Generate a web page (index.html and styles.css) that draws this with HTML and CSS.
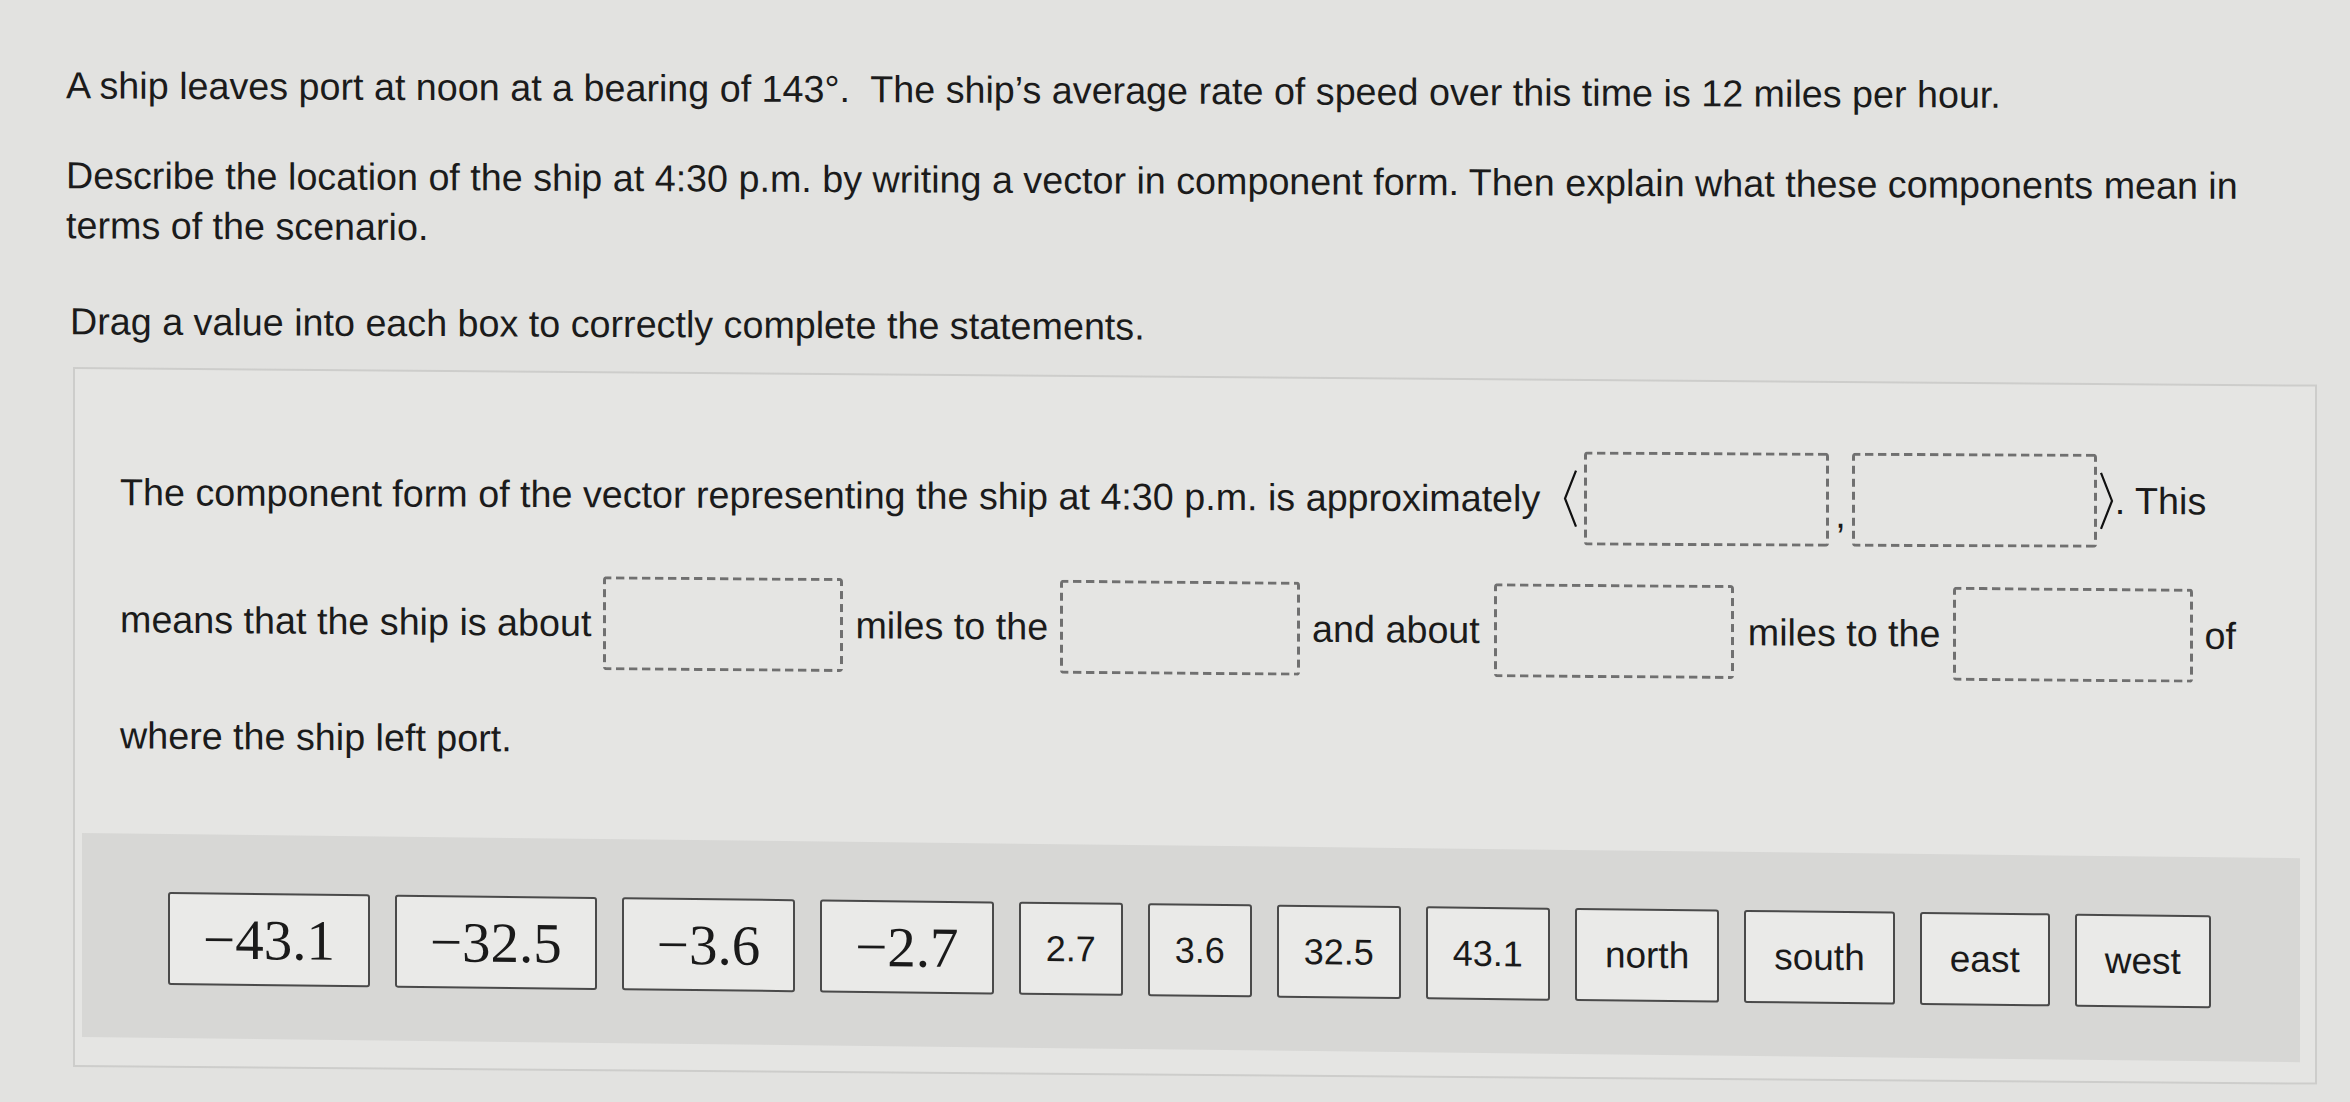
FILE: index.html
```html
<!DOCTYPE html>
<html lang="en">
<head>
<meta charset="utf-8">
<title>Vector drag and drop</title>
<link rel="stylesheet" href="styles.css">
</head>
<body>
<main class="page">
  <p class="stem stem-first">A ship leaves port at noon at a bearing of 143°.&nbsp; The ship’s average rate of speed over this time is 12 miles per hour.</p>
  <p class="stem stem-second">Describe the location of the ship at 4:30 p.m. by writing a vector in component form. Then explain what these components mean in terms of the scenario.</p>
  <p class="stem stem-third">Drag a value into each box to correctly complete the statements.</p>

  <section class="panel">
    <div class="statement row-one">
      <span class="txt">The component form of the vector representing the ship at 4:30 p.m. is approximately</span>
      <svg class="fence fence-left" width="16" height="60" viewBox="0 0 16 60"><polyline points="14,2 3,30 14,58" fill="none" stroke="#111" stroke-width="2.2"/></svg>
      <span class="drop drop-wide"></span>
      <span class="comma">,</span>
      <span class="drop drop-wide"></span>
      <svg class="fence fence-right" width="16" height="60" viewBox="0 0 16 60"><polyline points="2,2 13,30 2,58" fill="none" stroke="#111" stroke-width="2.2"/></svg>
      <span class="txt">. This</span>
    </div>
    <div class="statement row-two">
      <span class="txt">means that the ship is about</span>
      <span class="drop"></span>
      <span class="txt">miles to the</span>
      <span class="drop"></span>
      <span class="txt">and about</span>
      <span class="drop drop-gap"></span>
      <span class="txt">miles to the</span>
      <span class="drop"></span>
      <span class="txt">of</span>
    </div>
    <div class="statement row-three">
      <span class="txt">where the ship left port.</span>
    </div>

    <div class="tray">
      <span class="tile tile-serif">−43.1</span>
      <span class="tile tile-serif">−32.5</span>
      <span class="tile tile-serif">−3.6</span>
      <span class="tile tile-serif">−2.7</span>
      <span class="tile tile-num">2.7</span>
      <span class="tile tile-num">3.6</span>
      <span class="tile tile-num">32.5</span>
      <span class="tile tile-num">43.1</span>
      <span class="tile">north</span>
      <span class="tile">south</span>
      <span class="tile">east</span>
      <span class="tile">west</span>
    </div>
  </section>
</main>
</body>
</html>
```

FILE: styles.css
```css
html, body {
  margin: 0;
  padding: 0;
}

body {
  background: #e2e2e0;
  color: #1b1b1b;
  font-family: "Liberation Sans", Arial, sans-serif;
  width: 2350px;
  height: 1102px;
  overflow: hidden;
}

.page {
  padding: 60px 0 0 0;
}

.stem {
  margin: 0;
  padding-left: 66px;
  font-size: 37.7px;
  line-height: 50px;
  transform: skewY(0.28deg);
  transform-origin: 0 0;
}

.stem-second {
  margin-top: 40px;
  width: 2230px;
}

.stem-third {
  margin-top: 46px;
  padding-left: 70px;
}

.panel {
  margin: 21px 0 0 73px;
  width: 2244px;
  height: 700px;
  box-sizing: border-box;
  border: 2px solid #cdcdcb;
  background: #e5e5e3;
  padding-top: 76px;
  display: flex;
  flex-direction: column;
  transform: skewY(0.45deg);
  transform-origin: 0 0;
}

.statement {
  display: flex;
  align-items: center;
  padding-left: 45px;
  font-size: 37.7px;
  line-height: 50px;
}

.row-one {
  height: 94px;
  transform: skewY(-0.2deg);
  transform-origin: 0 50%;
}

.row-two {
  height: 94px;
  margin-top: 33px;
  gap: 12px;
}

.row-three {
  margin-top: 44px;
}

.drop {
  display: inline-block;
  flex: none;
  box-sizing: border-box;
  width: 240px;
  height: 94px;
  border-radius: 4px;
  background:
    linear-gradient(90deg, #707070 8px, transparent 8px) left top / 13px 3px repeat-x,
    linear-gradient(90deg, #707070 8px, transparent 8px) left bottom / 13px 3px repeat-x,
    linear-gradient(180deg, #707070 8px, transparent 8px) left top / 3px 13px repeat-y,
    linear-gradient(180deg, #707070 8px, transparent 8px) right top / 3px 13px repeat-y;
}

.drop-wide {
  width: 245px;
}

.drop-gap {
  margin: 0 2px;
}

.fence {
  display: block;
  flex: none;
}

.fence-left {
  margin: 0 6px 0 22px;
}

.fence-right {
  margin: 0 0 0 2px;
}

.comma {
  align-self: flex-end;
  margin: 0 6px 12px 6px;
  line-height: 40px;
}

.tray {
  margin: 73px 15px 0 7px;
  height: 204px;
  box-sizing: border-box;
  background: #d7d7d5;
  padding: 58px 0 0 86px;
  display: flex;
  align-items: flex-start;
  gap: 25px;
  transform: skewY(0.2deg);
  transform-origin: 0 0;
}

.tile {
  display: flex;
  align-items: center;
  justify-content: center;
  box-sizing: border-box;
  height: 93px;
  padding: 0 28px;
  background: #eaeae8;
  border: 2px solid #4a4a4a;
  border-radius: 3px;
  font-size: 37px;
  color: #1a1a1a;
}

.tile-num {
  padding: 0 25px;
  font-size: 36px;
}

.tile-serif {
  font-family: "Liberation Serif", "Times New Roman", serif;
  font-size: 57px;
  padding: 0 33px;
}
```
